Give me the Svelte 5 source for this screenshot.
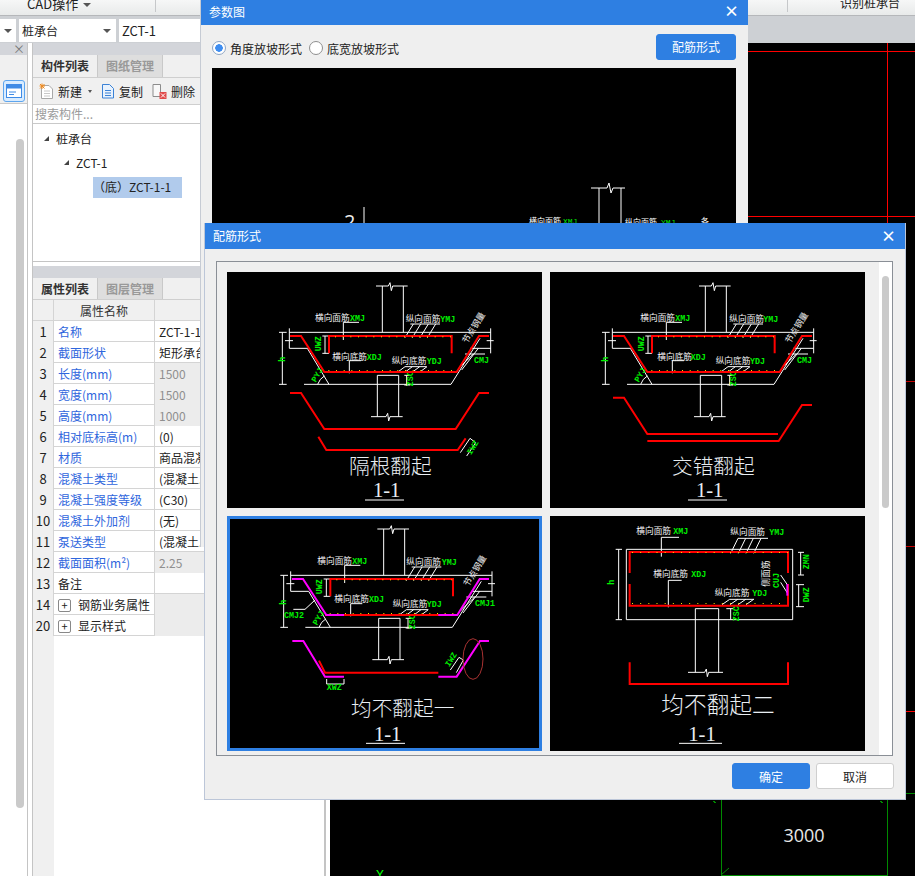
<script>
  const rows = [
    { n: 1, name: '名称', value: 'ZCT-1-1' },
    { n: 2, name: '截面形状', value: '矩形承台' },
    { n: 3, name: '长度(mm)', value: '1500', ro: true },
    { n: 4, name: '宽度(mm)', value: '1500', ro: true },
    { n: 5, name: '高度(mm)', value: '1000', ro: true },
    { n: 6, name: '相对底标高(m)', value: '(0)' },
    { n: 7, name: '材质', value: '商品混凝土' },
    { n: 8, name: '混凝土类型', value: '(混凝土...' },
    { n: 9, name: '混凝土强度等级', value: '(C30)' },
    { n: 10, name: '混凝土外加剂', value: '(无)' },
    { n: 11, name: '泵送类型', value: '(混凝土...' },
    { n: 12, name: '截面面积(m²)', value: '2.25', ro: true },
    { n: 13, name: '备注', value: '', plain: true },
    { n: 14, name: '钢筋业务属性', value: '', group: true },
    { n: 20, name: '显示样式', value: '', group: true }
  ];

  const topDots = Array.from({ length: 16 }, (_, i) => 330 + i * 23);
  const botDots = Array.from({ length: 17 }, (_, i) => 310 + i * 23);
  const rectTopDots = Array.from({ length: 20 }, (_, i) => 252 + i * 24.5);
  const rectBotDots = Array.from({ length: 19 }, (_, i) => 252 + i * 24.5);
</script>

{#snippet label(x, y, text, code, cx)}
  <text class="lab" {x} {y}>{text}</text>
  <text class="code" x={cx} {y}>{code}</text>
{/snippet}

{#snippet rot(x, y, deg, text)}
  <text class="code" {x} {y} transform="rotate({deg} {x} {y})">{text}</text>
{/snippet}

{#snippet titles(title, tx, ty, size, ox, uy, ux1, ux2)}
  <text class="title" x={tx} y={ty} style="font-size:{size}px">{title}</text>
  <text class="num" x={ox} y={uy - 8} text-anchor="middle">1-1</text>
  <path class="w" d="M{ux1} {uy}H{ux2}" />
{/snippet}

{#snippet slab()}
  <path class="w" d="M453 48H490L495 38L499 62L503 48H548M472 48V187M535 48V187M193 187H797M193 175V235M180 212H204M193 235H247L312 343M237 343H678L765 205M797 175V250M785 212H806M735 235H797M172 187V343M162 187H185M162 343H185M300 198V250M292 198H312M292 250H312M457 440V316H521V440M438 440H483L488 430L491 453L495 440H533M545 316V347M538 316H556M538 345H556M278 343Q284 326 298 318M720 252H780M704 292L745 252M710 300L760 235" />
  <path class="w" d="M355 210V157H402M373 310V272H408M556 162H645M540 203L565 162M562 203L587 162M585 203L610 162M607 203L632 162M540 290H605M520 305L540 290M542 305L562 290M564 305L584 290M586 305L606 290" />
  <path class="r" d="M312 250V198H680V250" />
  {#each topDots as x}<rect class="dot" {x} y="199" width="3" height="3" />{/each}
  {#each botDots as x}<rect class="dot" {x} y="300" width="3" height="3" />{/each}
  {@render rot(287, 244, -90, 'UWZ')}
  {@render rot(565, 349, -90, 'ZSC')}
  {@render rot(272, 338, -60, 'PYJ')}
  {@render rot(180, 275, -90, 'h')}
  <text class="lab" x="726" y="222" transform="rotate(-58 726 222)">节点钢量</text>
{/snippet}

<div class="app">
  <div class="topbar">
    <div class="menu">CAD操作 <i class="caret"></i></div>
    <div class="sep sep-a"></div>
    <div class="sep sep-b"></div>
    <div class="menu recog">识别桩承台</div>
  </div>

  <div class="selbar">
    <div class="sel sel0"><i class="caret"></i></div>
    <div class="sel sel1">桩承台<i class="caret"></i></div>
    <div class="sel sel2">ZCT-1</div>
  </div>

  <div class="main">
    <aside class="rail">
      <div class="rail-head"><span class="rail-x">×</span></div>
      <div class="rail-tools">
        <div class="rail-btn">
          <svg width="16" height="14" viewBox="0 0 16 14">
            <rect x="0.5" y="0.5" width="15" height="13" fill="#fff" stroke="#3f8be6" />
            <rect x="1" y="1" width="14" height="3.5" fill="#3f8be6" />
            <path d="M3 8H10M3 10.5H8" stroke="#3f8be6" />
          </svg>
        </div>
      </div>
      <div class="rail-body"><div class="rail-thumb"></div></div>
    </aside>

    <section class="panel">
      <div class="phead"></div>
      <div class="tabs">
        <div class="tab on">构件列表</div>
        <div class="tab">图纸管理</div>
      </div>
      <div class="tools">
        <span class="tool">
          <svg width="15" height="16" viewBox="0 0 15 16">
            <path d="M2.5 2.5H10L13.5 6V15.5H2.5Z" fill="#fff" stroke="#a8a8a8" />
            <path d="M5 8H11M5 10.5H11M5 13H11" stroke="#c8c8c8" />
            <path d="M3 0.5V6M0.5 3H6M1 1L5.5 5.5M5.5 1L1 5.5" stroke="#f08a1d" />
          </svg>
          新建 <i class="caret small"></i>
        </span>
        <span class="tool">
          <svg width="14" height="16" viewBox="0 0 14 16">
            <path d="M1.5 1.5H8.5L12.5 5.5V15H1.5Z" fill="#e8f2fd" stroke="#3b82d6" />
            <path d="M4 7.5H10M4 10H10M4 12.5H10" stroke="#3b82d6" />
          </svg>
          复制
        </span>
        <span class="tool">
          <svg width="15" height="16" viewBox="0 0 15 16">
            <path d="M1 1.5H8.5V13.5H1Z" fill="#f8f8f8" stroke="#8c8c8c" />
            <rect x="7.5" y="9" width="7" height="7" fill="#e04a4a" />
            <path d="M9 10.5L13 14.5M13 10.5L9 14.5" stroke="#fff" />
          </svg>
          删除
        </span>
      </div>
      <div class="search">搜索构件...</div>
      <div class="tree">
        <div class="node l0"><i class="tri"></i>桩承台</div>
        <div class="node l1"><i class="tri"></i>ZCT-1</div>
        <div class="node l2"><span class="picked">（底）ZCT-1-1</span></div>
      </div>

      <div class="pgap"></div>
      <div class="phead"></div>
      <div class="tabs short">
        <div class="tab on">属性列表</div>
        <div class="tab">图层管理</div>
      </div>
      <div class="table">
        <div class="row head">
          <div class="idx"></div>
          <div class="name">属性名称</div>
          <div class="val"></div>
        </div>
        {#each rows as row}
          <div class="row">
            <div class="idx">{row.n}</div>
            <div class="name" class:plain={row.plain || row.group}>
              {#if row.group}<i class="plus">+</i>{/if}{row.name}
            </div>
            <div class="val" class:ro={row.ro} class:grp={row.group}>{row.value}</div>
          </div>
        {/each}
        <div class="fill"><div class="fill-idx"></div></div>
      </div>
    </section>

    <div class="canvas">
      <svg width="585" height="833" viewBox="330 43 585 833">
        <path class="cad-bright" d="M748 51H915M887 43V223M748 216H915M906 711H915" />
        <path class="cad-red" d="M906 381H915M906 546H915" />
        <path class="cad-green" d="M721 800V876M887 800V876M906 793H915M721 875H887M713 801L716 803M880 801L883 803" />
        <path class="cad-tick" d="M721 875L729 868" />
        <text class="cad-num" x="804" y="842" text-anchor="middle">3000</text>
        <text class="cad-y" x="380" y="879" text-anchor="middle">Y</text>
      </svg>
    </div>
  </div>

  <div class="dialog dlg-a">
    <header class="dlg-head">
      <span>参数图</span>
      <span class="dlg-x">×</span>
    </header>
    <div class="a-bar">
      <label class="radio"><i class="dot-r on"></i>角度放坡形式</label>
      <label class="radio"><i class="dot-r"></i>底宽放坡形式</label>
      <button class="btn primary form-btn">配筋形式</button>
    </div>
    <div class="a-view">
      <svg width="525" height="155" viewBox="211 68 525 155">
        <path class="wt" d="M590 188H606L608 183L610 193L612 188H624M598 188V223M620 188V223M363 207V223" />
        <text class="big2" x="343" y="229">2</text>
        <text class="tiny" x="528" y="224">横向面筋</text>
        <text class="tiny g" x="562" y="224">XMJ</text>
        <text class="tiny" x="624" y="225">纵向面筋</text>
        <text class="tiny g" x="660" y="225">YMJ</text>
        <text class="tiny" x="700" y="224">各</text>
      </svg>
    </div>
  </div>

  <div class="dialog dlg-b">
    <header class="dlg-head">
      <span>配筋形式</span>
      <span class="dlg-x">×</span>
    </header>
    <div class="frame">
      <div class="grid">
        <div class="tile">
          <svg viewBox="6 6 945 708">
            {@render slab()}
            <path class="r" d="M195 198H228L298 306H695L762 198H792" />
            {@render label(270, 152, '横向面筋', 'XMJ', 375)}
            {@render label(542, 155, '纵向面筋', 'YMJ', 646)}
            {@render label(322, 270, '横向底筋', 'XDJ', 425)}
            {@render label(500, 282, '纵向底筋', 'YDJ', 605)}
            <text class="code" x="747" y="279">CMJ</text>
            <path class="r" d="M195 369H228L298 477H692L762 369H792M280 500L304 540H698L722 505" />
            <path class="w" d="M706 548L735 505L752 518L725 558" />
            {@render rot(738, 556, -58, 'IWZ')}
            {@render titles('隔根翻起', 372, 612, 62, 485, 690, 420, 537)}
          </svg>
        </div>
        <div class="tile">
          <svg viewBox="6 6 945 708">
            {@render slab()}
            <path class="r" d="M195 198H228L298 306H695L762 198H792" />
            {@render label(277, 152, '横向面筋', 'XMJ', 382)}
            {@render label(544, 155, '纵向面筋', 'YMJ', 646)}
            {@render label(328, 270, '横向底筋', 'XDJ', 428)}
            {@render label(503, 282, '纵向底筋', 'YDJ', 606)}
            <text class="code" x="747" y="279">CMJ</text>
            <path class="r" d="M195 383H228L298 492H690M298 513H692L762 405H792" />
            {@render titles('交错翻起', 372, 612, 62, 485, 690, 420, 537)}
          </svg>
        </div>
        <div class="tile picked-tile">
          <svg viewBox="6 6 945 708">
            <g transform="translate(4 -3)">
              {@render slab()}
              <path class="r" d="M296 306H693" />
              <path class="m" d="M197 198H230L300 306H353M636 306H693L760 198H788" />
            </g>
            {@render label(277, 150, '横向面筋', 'XMJ', 382)}
            {@render label(544, 152, '纵向面筋', 'YMJ', 650)}
            {@render label(328, 265, '横向底筋', 'XDJ', 432)}
            {@render label(503, 280, '纵向底筋', 'YDJ', 605)}
            <text class="code" x="750" y="275">CMJ1</text>
            <text class="code" x="177" y="311">CMJ2</text>
            <path class="w" d="M205 286H240L270 258" />
            <path class="r" d="M282 440L300 476H640" />
            <path class="m" d="M202 381H235L300 488H357M640 488H695L765 381H792" />
            <path class="w" d="M305 495V510H357V495M676 468L702 430L715 438L694 476" />
            <text class="code" x="305" y="527">XWZ</text>
            {@render rot(673, 460, -58, 'IWZ')}
            <ellipse cx="744" cy="435" rx="30" ry="61" fill="none" stroke="#a83232" stroke-width="3" />
            {@render titles('均不翻起一', 378, 606, 62, 488, 688, 423, 540)}
          </svg>
        </div>
        <div class="tile">
          <svg viewBox="6 6 945 708">
            <path class="w" d="M235 106H734V317H235ZM442 475V284H512V475M420 475H470L475 465L478 488L482 475H525M212 106V317M203 106H222M203 317H222M758 115V183M750 115H768M750 183H768M752 212V278M744 212H768M744 278H768M535 284H555M548 284V317" />
            <path class="w" d="M340 128V70H393M570 73H660M548 118L570 73M571 118L593 73M594 118L616 73M617 118L639 73M361 280V199H401M545 256H618M522 272L545 256M546 272L569 256M570 272L593 256M594 272L617 256M698 183L720 215M698 205L720 240" />
            <path class="r" d="M245 177V114H720V177M245 210V275H720V210" />
            <path class="m" d="M718 210V245" />
            {#each rectTopDots as x}<rect class="dot" {x} y="114" width="3" height="3" />{/each}
            {#each rectBotDots as x}<rect class="dot" {x} y="267" width="3" height="3" />{/each}
            {@render label(265, 60, '横向面筋', 'XMJ', 376)}
            {@render label(547, 62, '纵向面筋', 'YMJ', 664)}
            {@render label(316, 188, '横向底筋', 'XDJ', 430)}
            {@render label(500, 245, '纵向底筋', 'YDJ', 613)}
            {@render rot(783, 166, -90, 'ZMN')}
            {@render rot(783, 265, -90, 'DWZ')}
            {@render rot(572, 322, -90, 'ZSC')}
            {@render rot(692, 222, -90, 'CUJ')}
            {@render rot(197, 212, -90, 'h')}
            <text class="lab" x="663" y="218" transform="rotate(-90 663 218)">侧面筋</text>
            <path class="r" d="M245 445V510H720V445" />
            {@render titles('均不翻起二', 340, 596, 68, 462, 688, 393, 522)}
          </svg>
        </div>
      </div>
      <div class="vscroll"><div class="vthumb"></div></div>
    </div>
    <footer class="dlg-foot">
      <button class="btn primary">确定</button>
      <button class="btn">取消</button>
    </footer>
  </div>
</div>

<style>
  :global(body) {
    margin: 0;
  }

  .app {
    position: relative;
    width: 915px;
    height: 876px;
    overflow: hidden;
    display: flex;
    flex-direction: column;
    background: #fff;
    color: #222;
    font: 12px "Noto Sans CJK SC", "Open Sans", sans-serif;
  }

  i {
    font-style: normal;
  }

  .caret {
    display: inline-block;
    width: 0;
    height: 0;
    border-left: 4px solid transparent;
    border-right: 4px solid transparent;
    border-top: 4px solid #555;
  }

  .caret.small {
    border-width: 3px 2.5px 0;
    margin-left: 2px;
  }

  /* top ribbon, cut off by the window edge */
  .topbar {
    height: 15px;
    flex: none;
    position: relative;
    display: flex;
    align-items: flex-end;
    background: linear-gradient(#f6f7f7, #e8eaea);
    border-bottom: 1px solid #b5b7ba;
  }

  .menu {
    padding: 0 0 3px 27px;
    line-height: 17px;
    font-size: 13px;
    white-space: nowrap;
  }

  .menu .caret {
    margin: 0 0 2px 2px;
  }

  .recog {
    margin-left: auto;
    padding: 0 15px 4px 0;
    font-size: 12px;
  }

  .sep {
    position: absolute;
    top: 0;
    bottom: 3px;
    width: 1px;
    background: #c6c8ca;
  }

  .sep-a {
    left: 155px;
  }

  .sep-b {
    left: 787px;
  }

  .selbar {
    height: 27px;
    flex: none;
    box-sizing: border-box;
    display: flex;
    gap: 3px;
    padding: 3px 0 1px;
    background: #cdd0d4;
  }

  .sel {
    display: flex;
    align-items: center;
    justify-content: space-between;
    box-sizing: border-box;
    padding: 0 5px 0 3px;
    background: #fff;
    font-size: 13px;
  }

  .sel0 {
    width: 16px;
    padding: 0 4px 0 0;
    justify-content: flex-end;
  }

  .sel1 {
    width: 97px;
    font-size: 12px;
  }

  .sel2 {
    width: 120px;
  }

  .main {
    flex: 1;
    min-height: 0;
    display: flex;
  }

  .rail {
    width: 28px;
    flex: none;
    box-sizing: border-box;
    border-right: 1px solid #c4c4c4;
    display: flex;
    flex-direction: column;
  }

  .rail-head {
    height: 12px;
    background: #d3d5da;
    text-align: right;
    line-height: 12px;
  }

  .rail-x {
    padding-right: 2px;
    color: #777;
    font-size: 12px;
  }

  .rail-tools {
    height: 49px;
    box-sizing: border-box;
    background: #f0f0f0;
    border-bottom: 1px solid #c9c9c9;
    padding: 25px 0 0 3px;
  }

  .rail-btn {
    width: 22px;
    height: 22px;
    box-sizing: border-box;
    display: flex;
    align-items: center;
    justify-content: center;
    background: #d9ecff;
    border: 1px solid #5da5ee;
    border-radius: 3px;
  }

  .rail-body {
    flex: 1;
    padding: 35px 0 0 16px;
  }

  .rail-thumb {
    width: 8px;
    height: 669px;
    background: #cacaca;
    border-radius: 4px;
  }

  .panel {
    width: 294px;
    flex: none;
    margin-left: 4px;
    box-sizing: border-box;
    border-left: 1px solid #c4c4c4;
    border-right: 2px solid #c4c4c4;
    display: flex;
    flex-direction: column;
  }

  .phead {
    height: 12px;
    flex: none;
    background: #d3d5da;
  }

  .tabs {
    height: 23px;
    flex: none;
    box-sizing: border-box;
    display: flex;
    background: #f0f0f0;
    border-bottom: 1px solid #cfcfcf;
  }

  .tabs.short {
    height: 22px;
  }

  .tab {
    width: 65px;
    box-sizing: border-box;
    text-align: center;
    line-height: 22px;
    font-weight: 700;
    color: #999;
    background: #dedede;
    border-right: 1px solid #c9c9c9;
  }

  .tab.on {
    color: #333;
    background: #f0f0f0;
  }

  .tools {
    height: 27px;
    flex: none;
    box-sizing: border-box;
    display: flex;
    align-items: center;
    gap: 9px;
    padding-left: 6px;
    background: #f0f0f0;
    border-bottom: 1px solid #cfcfcf;
  }

  .tool {
    display: inline-flex;
    align-items: center;
    gap: 4px;
    white-space: nowrap;
  }

  .search {
    height: 19px;
    flex: none;
    box-sizing: border-box;
    padding-left: 2px;
    line-height: 18px;
    color: #9b9b9b;
    border-bottom: 1px solid #c9c9c9;
  }

  .tree {
    height: 138px;
    flex: none;
    box-sizing: border-box;
    padding-top: 2px;
    border-bottom: 1px solid #c4c4c4;
  }

  .node {
    height: 24px;
    display: flex;
    align-items: center;
  }

  .l0 {
    padding-left: 11px;
  }

  .l1 {
    padding-left: 31px;
  }

  .l2 {
    padding-left: 60px;
  }

  .tri {
    width: 0;
    height: 0;
    margin-right: 7px;
    border-bottom: 5px solid #444;
    border-left: 5px solid transparent;
  }

  .picked {
    display: block;
    width: 89px;
    height: 21px;
    margin-top: 2px;
    line-height: 20px;
    white-space: nowrap;
    background: #b1cbec;
  }

  .pgap {
    height: 4px;
    flex: none;
  }

  .table {
    flex: 1;
    min-height: 0;
    display: flex;
    flex-direction: column;
  }

  .row {
    height: 21px;
    flex: none;
    box-sizing: border-box;
    display: grid;
    grid-template-columns: 21px 101px 1fr;
    line-height: 21px;
    border-bottom: 1px solid #d4d4d4;
    white-space: nowrap;
  }

  .idx {
    text-align: center;
    background: #f0f0f0;
    border-right: 1px solid #d4d4d4;
    font-size: 13px;
  }

  .name {
    padding-left: 4px;
    color: #2f66dd;
    border-right: 1px solid #d4d4d4;
    overflow: hidden;
  }

  .head .name {
    padding: 0;
    text-align: center;
    color: #333;
    background: #f0f0f0;
  }

  .head .val {
    background: #f0f0f0;
  }

  .name.plain {
    color: #222;
  }

  .plus {
    display: inline-block;
    width: 11px;
    height: 11px;
    margin: 0 7px 0 0;
    line-height: 10px;
    text-align: center;
    font-size: 11px;
    border: 1px solid #888;
    border-radius: 2px;
  }

  .val {
    padding-left: 4px;
    overflow: hidden;
  }

  .val.ro {
    color: #8f8f8f;
    background: #ececec;
  }

  .val.grp {
    background: #ececec;
  }

  .fill {
    flex: 1;
  }

  .fill-idx {
    width: 21px;
    height: 100%;
    background: #f0f0f0;
  }

  /* drawing area behind the dialogs */
  .canvas {
    flex: 1;
    margin-left: 4px;
    background: #000;
    overflow: hidden;
  }

  .canvas svg {
    display: block;
    shape-rendering: crispEdges;
  }

  .cad-red {
    fill: none;
    stroke: #c40000;
  }

  .cad-bright {
    fill: none;
    stroke: #ff0000;
  }

  .cad-green {
    fill: none;
    stroke: #008a00;
  }

  .cad-tick {
    fill: none;
    stroke: #008a00;
    shape-rendering: auto;
  }

  .cad-num {
    fill: #e8e8e8;
    font-size: 18px;
    font-family: "Open Sans", sans-serif;
  }

  .cad-y {
    fill: #00ff00;
    font-size: 13px;
    font-family: "Liberation Mono", monospace;
  }

  /* floating windows */
  .dialog {
    position: absolute;
    box-sizing: border-box;
    display: flex;
    flex-direction: column;
    background: #efefef;
  }

  .dlg-a {
    left: 200px;
    top: -1px;
    width: 548px;
    height: 548px;
    border-left: 1px solid #c6cbd4;
  }

  .dlg-b {
    left: 204px;
    top: 223px;
    width: 702px;
    height: 577px;
    border: 1px solid #bcc6d8;
    border-top: 0;
  }

  .dlg-head {
    height: 26px;
    flex: none;
    box-sizing: border-box;
    display: flex;
    align-items: center;
    justify-content: space-between;
    padding: 0 9px 2px 8px;
    color: #fff;
    background: #2e7fe2;
  }

  .dlg-b .dlg-head {
    padding-bottom: 1px;
  }

  .dlg-x {
    font-size: 15px;
    font-weight: 700;
    line-height: 20px;
  }

  .a-bar {
    height: 43px;
    flex: none;
    box-sizing: border-box;
    display: flex;
    align-items: center;
    gap: 7px;
    padding: 3px 12px 0 11px;
  }

  .radio {
    display: inline-flex;
    align-items: center;
    gap: 4px;
    color: #222;
  }

  .dot-r {
    width: 14px;
    height: 14px;
    box-sizing: border-box;
    background: #fff;
    border: 1px solid #8f8f8f;
    border-radius: 50%;
  }

  .dot-r.on {
    background: radial-gradient(circle, #3f8df0 0 3.5px, #fff 4px);
    border-color: #8fa6c4;
  }

  .form-btn {
    margin-left: auto;
    margin-top: -3px;
  }

  .a-view {
    margin: 0 12px 0 11px;
    background: #000;
    flex: 1;
  }

  .a-view svg {
    display: block;
  }

  .wt {
    fill: none;
    stroke: #fff;
  }

  .big2 {
    fill: #eee;
    font-size: 20px;
    font-family: "Open Sans", sans-serif;
  }

  .tiny {
    fill: #fff;
    font-size: 8px;
  }

  .tiny.g {
    fill: #00e000;
    font-family: "Liberation Mono", monospace;
  }

  .frame {
    margin: 12px 12px 0 11px;
    height: 495px;
    flex: none;
    box-sizing: border-box;
    display: flex;
    overflow: hidden;
    border: 1px solid #8a8f96;
  }

  .grid {
    width: 662px;
    flex: none;
    box-sizing: border-box;
    display: grid;
    grid-template-columns: 315px 315px;
    grid-template-rows: 236px 235px;
    gap: 8px;
    padding: 10px 0 0 10px;
    background: #efefef;
  }

  .tile {
    background: #000;
    overflow: hidden;
    isolation: isolate;
  }

  .tile svg {
    display: block;
    width: 315px;
    height: 236px;
  }

  .picked-tile {
    outline: 3px solid #2e7fe2;
    outline-offset: -3px;
  }

  .picked-tile svg {
    position: relative;
    z-index: -1;
  }

  .lab {
    fill: #f2f2f2;
    font-size: 26px;
  }

  .code {
    fill: #00f000;
    font-size: 25px;
    font-weight: 700;
    font-family: "Liberation Mono", monospace;
  }

  .title {
    fill: #e8edf2;
    font-family: "Noto Sans CJK SC", sans-serif;
    font-weight: 300;
  }

  .num {
    fill: #e8edf2;
    font-size: 62px;
    font-family: "Liberation Serif", serif;
  }

  .w {
    fill: none;
    stroke: #fff;
    stroke-width: 3;
  }

  .r {
    fill: none;
    stroke: #ff0000;
    stroke-width: 6;
  }

  .m {
    fill: none;
    stroke: #ff00ff;
    stroke-width: 6;
  }

  .dot {
    fill: #ffe000;
  }

  .vscroll {
    flex: 1;
    background: #fff;
    padding: 14px 3px 0;
  }

  .vthumb {
    height: 232px;
    background: #cacaca;
    border-radius: 4px;
  }

  .dlg-foot {
    flex: 1;
    display: flex;
    justify-content: flex-end;
    align-items: flex-start;
    gap: 6px;
    padding: 7px 11px 0 0;
  }

  .btn {
    width: 78px;
    height: 26px;
    box-sizing: border-box;
    padding: 0;
    color: #222;
    background: #fff;
    border: 1px solid #cfcfcf;
    border-radius: 3px;
    font: inherit;
  }

  .btn.primary {
    color: #fff;
    background: #2e7fe2;
    border-color: #2e7fe2;
  }

  .form-btn.btn {
    width: 80px;
  }
</style>
